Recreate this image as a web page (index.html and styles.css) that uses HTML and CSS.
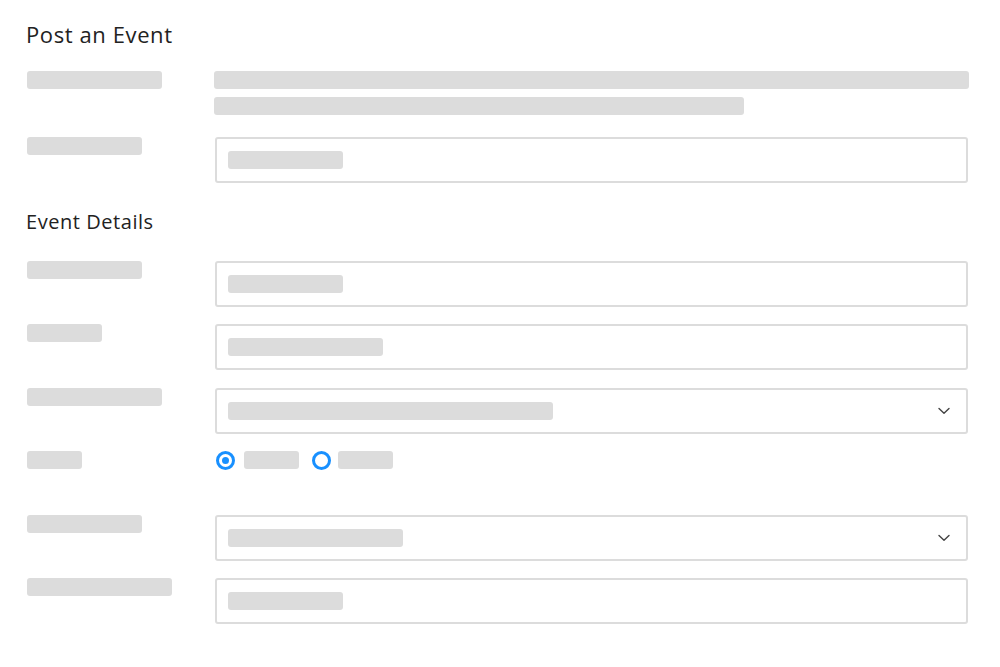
FILE: index.html
```html
<!DOCTYPE html>
<html lang="en">
<head>
<meta charset="utf-8">
<title>Post an Event</title>
<link rel="stylesheet" href="styles.css">
</head>
<body>
<main class="page">
  <h1 class="title">Post an Event</h1>

  <section class="intro-rows">
    <div class="row row-text">
      <div class="label"><span class="sk" style="width:135px"></span></div>
      <div class="desc">
        <span class="sk" style="width:755px"></span>
        <span class="sk" style="width:530px"></span>
      </div>
    </div>
    <div class="row">
      <div class="label"><span class="sk" style="width:115px"></span></div>
      <div class="field"><span class="sk" style="width:115px"></span></div>
    </div>
  </section>

  <h2 class="subtitle">Event Details</h2>

  <section class="detail-rows">
    <div class="row">
      <div class="label"><span class="sk" style="width:115px"></span></div>
      <div class="field"><span class="sk" style="width:115px"></span></div>
    </div>
    <div class="row">
      <div class="label"><span class="sk" style="width:75px"></span></div>
      <div class="field"><span class="sk" style="width:155px"></span></div>
    </div>
    <div class="row">
      <div class="label"><span class="sk" style="width:135px"></span></div>
      <div class="field select"><span class="sk" style="width:325px"></span>
        <svg class="chev" width="12" height="8" viewBox="0 0 12 8"><path d="M1 1.5 L6 6.3 L11 1.5" fill="none" stroke="#444" stroke-width="1.4" stroke-linecap="round" stroke-linejoin="round"/></svg>
      </div>
    </div>
    <div class="row row-radio">
      <div class="label"><span class="sk" style="width:55px"></span></div>
      <div class="radios">
        <span class="radio checked"></span><span class="sk first-opt" style="width:55px"></span>
        <span class="radio second"></span><span class="sk" style="width:55px"></span>
      </div>
    </div>
    <div class="row">
      <div class="label"><span class="sk" style="width:115px"></span></div>
      <div class="field select"><span class="sk" style="width:175px"></span>
        <svg class="chev" width="12" height="8" viewBox="0 0 12 8"><path d="M1 1.5 L6 6.3 L11 1.5" fill="none" stroke="#444" stroke-width="1.4" stroke-linecap="round" stroke-linejoin="round"/></svg>
      </div>
    </div>
    <div class="row">
      <div class="label"><span class="sk" style="width:145px"></span></div>
      <div class="field"><span class="sk" style="width:115px"></span></div>
    </div>
  </section>
</main>
</body>
</html>
```

FILE: styles.css
```css
* { box-sizing: border-box; }
html, body { margin: 0; padding: 0; background: #fff; }
body {
  font-family: "Open Sans", "Liberation Sans", sans-serif;
  color: #222;
  width: 1000px;
  height: 667px;
  overflow: hidden;
}
.page {
  padding: 22px 32px 0 27px;
}
.title {
  margin: 0 0 25px -1px;
  font-size: 22px;
  line-height: 24px;
  font-weight: 400;
  letter-spacing: 0.6px;
}
.subtitle {
  margin: 26.5px 0 27.5px -1px;
  font-size: 20px;
  line-height: 24px;
  font-weight: 400;
  letter-spacing: 0.55px;
}
.intro-rows, .detail-rows {
  display: flex;
  flex-direction: column;
}
.intro-rows { gap: 22px; }
.detail-rows { gap: 17.4px; }
.row {
  display: grid;
  grid-template-columns: 188px 753px;
  align-items: start;
}
.row-text { grid-template-columns: 187px 756px; }
.label { height: 18px; }
.sk {
  display: block;
  height: 18px;
  background: #dcdcdc;
  border-radius: 3px;
}
.desc {
  display: flex;
  flex-direction: column;
  gap: 8px;
}
.field {
  height: 46px;
  border: 2px solid #dcdcdc;
  border-radius: 3px;
  padding: 0 0 0 11px;
  display: flex;
  align-items: center;
  justify-content: space-between;
}
.field.select { padding-right: 16px; }
.chev { display: block; }
.row-radio { height: 46px; }
.radios {
  display: flex;
  align-items: center;
  height: 18px;
}
.radio {
  width: 19px;
  height: 19px;
  border: 3px solid #1890ff;
  border-radius: 50%;
  margin: 0 9px 0 1px;
  position: relative;
  flex: none;
}
.first-opt { margin-right: 13px; }
.radio.second { margin: 0 7px 0 0; }
.radio.checked::after {
  content: "";
  position: absolute;
  left: 50%;
  top: 50%;
  width: 7px;
  height: 7px;
  margin: -3.5px 0 0 -3.5px;
  border-radius: 50%;
  background: #1890ff;
}
```
